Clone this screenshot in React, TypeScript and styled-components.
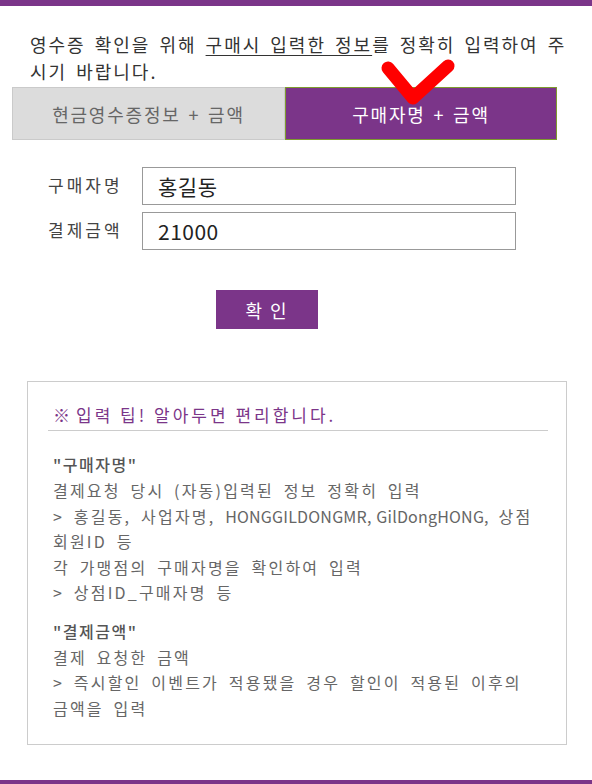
import React, { useState } from 'react';
import styled, { createGlobalStyle } from 'styled-components';

const purple = '#7b3589';

const GlobalStyle = createGlobalStyle`
  html, body {
    margin: 0;
    padding: 0;
    background: #fff;
  }
  body {
    font-family: "Noto Sans CJK KR", "Noto Sans", sans-serif;
  }
`;

const StyledPage = styled.div`
  box-sizing: border-box;
  width: 592px;
  height: 784px;
  border-top: 6px solid ${purple};
  border-bottom: 4px solid ${purple};
  overflow: hidden;
`;

const StyledIntro = styled.p`
  margin: 25px 22px 0 30px;
  font-size: 18px;
  line-height: 27px;
  color: #333;
  letter-spacing: 2px;
  word-spacing: 3px;
`;

const StyledUnderline = styled.span`
  text-decoration: underline;
  text-underline-offset: 3px;
`;

const StyledTabs = styled.div`
  position: relative;
  display: grid;
  grid-template-columns: 273px 272px;
  margin: 2px 0 0 12px;
  height: 53px;
`;

const StyledTab = styled.button<{ $active: boolean }>`
  display: flex;
  align-items: center;
  justify-content: center;
  box-sizing: border-box;
  margin: 0;
  padding: 0;
  font-family: inherit;
  font-size: 18px;
  letter-spacing: 1.8px;
  word-spacing: 2px;
  cursor: pointer;
  border: 1px solid ${(p) => (p.$active ? '#7e9b2e' : '#cacaca')};
  background-color: ${(p) => (p.$active ? purple : '#dcdcdc')};
  color: ${(p) => (p.$active ? '#fff' : '#666')};
`;

const StyledCheck = styled.svg`
  position: absolute;
  left: 358px;
  top: -36px;
  pointer-events: none;
`;

const StyledForm = styled.div`
  display: flex;
  flex-direction: column;
  gap: 7px;
  margin: 27px 0 0 48px;
`;

const StyledRow = styled.label`
  display: flex;
  align-items: center;
`;

const StyledLabel = styled.span`
  width: 94px;
  margin-top: -4px;
  font-size: 17px;
  color: #444;
  letter-spacing: 3px;
`;

const StyledInput = styled.input`
  box-sizing: border-box;
  width: 374px;
  height: 38px;
  padding: 0 15px;
  border: 1px solid #999;
  font-family: inherit;
  font-size: 21px;
  letter-spacing: 0.5px;
  color: #222;
  outline: none;
`;

const StyledSubmit = styled.button`
  display: block;
  width: 102px;
  height: 39px;
  margin: 40px 0 0 216px;
  padding: 0;
  border: 0;
  background-color: ${purple};
  color: #fff;
  font-family: inherit;
  font-size: 18px;
  letter-spacing: 2px;
  cursor: pointer;
`;

const StyledTipBox = styled.div`
  box-sizing: border-box;
  width: 540px;
  height: 364px;
  margin: 52px 0 0 27px;
  padding: 21px 18px 0 20px;
  border: 1px solid #cccccc;
`;

const StyledTipTitle = styled.div`
  padding: 0 0 3px 5px;
  border-bottom: 1px solid #cccccc;
  font-size: 17px;
  line-height: 24px;
  color: ${purple};
  letter-spacing: 3px;
`;

const StyledTipMark = styled.span`
  font-weight: bold;
  letter-spacing: 0;
  margin-right: 6px;
`;

const StyledTipSection = styled.div`
  padding-left: 5px;
  margin-top: 20px;

  & + & {
    margin-top: 12px;
  }
`;

const StyledTipHeading = styled.div`
  font-size: 16px;
  line-height: 27px;
  color: #555;
  font-weight: 500;
  letter-spacing: 1.5px;
`;

const StyledTipLine = styled.div`
  font-size: 16px;
  line-height: 25.5px;
  color: #666;
  letter-spacing: 2.2px;
  word-spacing: 4px;
`;

const StyledLatin = styled.span`
  letter-spacing: 0.2px;
  word-spacing: 1px;
`;

const tips: { title: string; lines: React.ReactNode[] }[] = [
  {
    title: '"구매자명"',
    lines: [
      '결제요청 당시 (자동)입력된 정보 정확히 입력',
      <>
        &gt; 홍길동, 사업자명, <StyledLatin>HONGGILDONGMR, GilDongHONG,</StyledLatin> 상점 회원ID 등
      </>,
      '각 가맹점의 구매자명을 확인하여 입력',
      '> 상점ID_구매자명 등',
    ],
  },
  {
    title: '"결제금액"',
    lines: ['결제 요청한 금액', '> 즉시할인 이벤트가 적용됐을 경우 할인이 적용된 이후의 금액을 입력'],
  },
];

const App = () => {
  const [tab, setTab] = useState(1);
  const [name, setName] = useState('홍길동');
  const [amount, setAmount] = useState('21000');

  return (
    <StyledPage>
      <GlobalStyle />
      <StyledIntro>
        영수증 확인을 위해 <StyledUnderline>구매시 입력한 정보</StyledUnderline>를 정확히 입력하여 주시기 바랍니다.
      </StyledIntro>
      <StyledTabs>
        <StyledTab $active={tab === 0} onClick={() => setTab(0)}>
          현금영수증정보 + 금액
        </StyledTab>
        <StyledTab $active={tab === 1} onClick={() => setTab(1)}>
          구매자명 + 금액
        </StyledTab>
        <StyledCheck width='90' height='62' viewBox='0 0 90 62'>
          <polyline
            points='18,17 43,47 78,15'
            fill='none'
            stroke='#ff0000'
            strokeWidth='13'
            strokeLinecap='round'
            strokeLinejoin='round'
          />
        </StyledCheck>
      </StyledTabs>
      <StyledForm>
        <StyledRow>
          <StyledLabel>구매자명</StyledLabel>
          <StyledInput value={name} onChange={(e) => setName(e.target.value)} />
        </StyledRow>
        <StyledRow>
          <StyledLabel>결제금액</StyledLabel>
          <StyledInput value={amount} onChange={(e) => setAmount(e.target.value)} />
        </StyledRow>
      </StyledForm>
      <StyledSubmit>확 인</StyledSubmit>
      <StyledTipBox>
        <StyledTipTitle>
          <StyledTipMark>※</StyledTipMark>입력 팁! 알아두면 편리합니다.
        </StyledTipTitle>
        {tips.map((tip) => (
          <StyledTipSection key={tip.title}>
            <StyledTipHeading>{tip.title}</StyledTipHeading>
            {tip.lines.map((line, i) => (
              <StyledTipLine key={i}>{line}</StyledTipLine>
            ))}
          </StyledTipSection>
        ))}
      </StyledTipBox>
    </StyledPage>
  );
};

export default App;
